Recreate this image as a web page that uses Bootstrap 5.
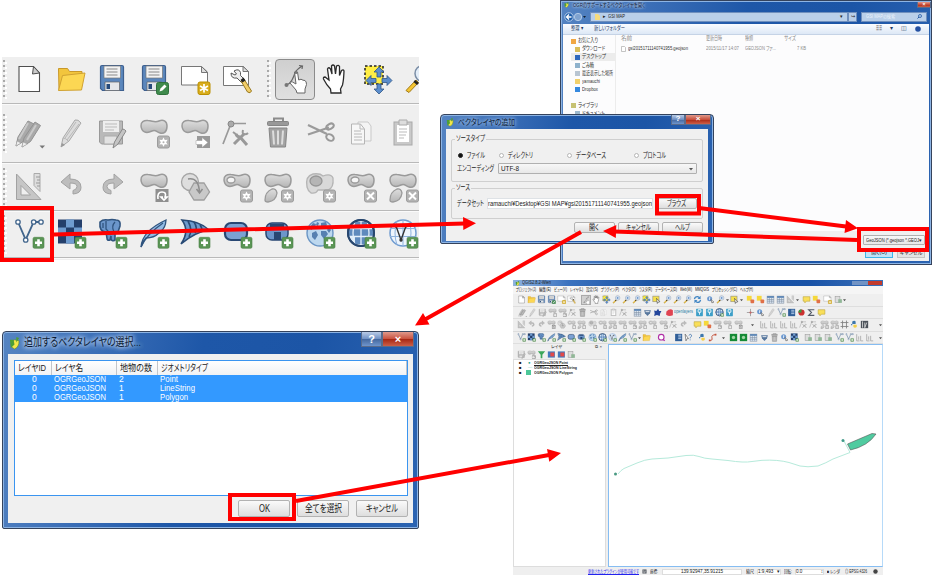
<!DOCTYPE html>
<html lang="ja">
<head>
<meta charset="utf-8">
<title>QGIS ベクタレイヤの追加</title>
<link rel="stylesheet" href="https://cdn.jsdelivr.net/npm/bootstrap@5.3.0/dist/css/bootstrap.min.css">
<style>
body{width:932px;height:575px;overflow:hidden;background:#fff;font-family:"Liberation Sans","Noto Sans CJK JP",sans-serif;font-feature-settings:"palt";color:#222;line-height:1}
.stage{width:932px;height:575px;overflow:hidden}
.win,.overlay{position:absolute}
.fit{display:inline-block;white-space:nowrap;flex:none;transform-origin:0 50%}
svg{display:block;flex:none}
/* large toolbars */
.tools{left:2px;top:57px;width:417px;height:203px;background:#efefef;overflow:hidden}
.trow{border-bottom:1px solid #b9b9b9;box-shadow:0 1px #fafafa;flex:none}
.trow.r1{height:47px;padding-bottom:2px}.trow.r2{height:59px}.trow.r3{height:48px}.trow.r4{height:47px}
.grip{width:6.3px;height:40px;flex:none;background:radial-gradient(circle at 2px 2px,#a9a9a9 .9px,transparent 1.2px) 0 0/5px 5px,radial-gradient(circle at 2px 2px,#fff 1px,transparent 1.3px) 2px 2px/5px 5px}
.grip.mid{margin-left:8px;margin-right:2px}
.cell{width:41.55px;flex:none}
.cell svg{width:32px;height:32px}
.pressed{width:40px;height:41px;border:1px solid #8b8b8b;border-radius:4px;background:linear-gradient(#cfcfcf,#e0e0e0)}
/* window frames */
.aero{background:linear-gradient(100deg,#5584c2 0,#3d70b8 20%,#1e57a8 45%,#1c55a6 70%,#2c64b2 100%);border:1px solid #35435c;border-radius:4px 4px 2px 2px;box-shadow:inset 0 0 0 1px #8db4e4}
.body-area{background:#f0f0f0}
.capbtn{color:#fff;border:1px solid #5a6c8c;border-top:0;background:linear-gradient(#b9cbe6,#6d8fc4 50%,#44689f 52%,#6f95cc);font-weight:700}
.capbtn.red{background:linear-gradient(#e09a8c,#c9503d 50%,#a82814 52%,#cd5f48)}
.wbtn{border:1px solid #b2b2b2;border-radius:2px;background:linear-gradient(#fafafa,#ececec 50%,#dedede);flex:none}
.cmb{border:1px solid #b0b0b0;background:linear-gradient(#f7f7f7,#e8e8e8);border-radius:1px}
/* layer selection dialog */
.sel{left:2px;top:331px;width:417px;height:198px}
.sel .ttl{height:22px;padding-left:6px}
.sel .ttl .fit{font-size:11.5px;color:#0a1a33;text-shadow:0 0 6px #cfe0f7,0 0 5px #cfe0f7,0 0 8px #a9c7ef}
.sel .body-area{margin:0 5px 5px;height:169px;padding:6px 5px 0 6px}
.grid-box{height:136px;border:1px solid #3b95f0;background:#fff}
.hd{height:14px;background:linear-gradient(#fff,#f1f2f4);font-size:9.5px}
.hd>div{border-right:1px solid #c2c5ca;padding-left:3px}
.c1{width:37px}.c2{width:65px}.c3{width:41px}.c4{flex:1}
.pick{background:#3399ff;color:#fff;font-size:8.5px;height:27px}
.pick .d-flex{height:8.9px}
.pick .c1{padding-left:17px}.pick .c2,.pick .c3,.pick .c4{padding-left:2px}
.sel .wbtn{width:52px;height:17px;font-size:10px}
/* explorer */
.exp{left:560px;top:0;width:372px;height:265px;border-radius:0}
.exp .ttl{height:8px;padding-left:3px;font-size:6px}
.exp .ttl .fit{color:#0d2040;text-shadow:0 0 3px #cfe0f7,0 0 3px #cfe0f7}
.exp .nav-line{height:15px;padding:0 4px 0 3px;font-size:5px}
.addr{background:#b9cfe9;border:1px solid #6f8fbd;height:10px}
.cmdbar{height:11px;background:linear-gradient(#fafcff,#dde8f6);margin:0 2px;font-size:5.5px;color:#1e3a63;border-bottom:1px solid #c5d3e6}
.pane{margin:0 2px;height:196px;background:#fcfcfd;font-size:5.6px;color:#333}
.side{width:53px;border-right:1px solid #ececec;padding:2px 0 0 8px}
.side .it{height:8.15px;padding-left:4px}
.side .it i,.side .tp i{width:5px;height:5px;margin-right:2px;flex:none}
.foot{margin:0 2px;height:30px;background:#f0f0f0;font-size:5px}
.foot .cmb{width:62px;height:10px}
.fbtn{width:28px;height:9px;border:1px solid #c4c4c4;background:#e3e3e3;overflow:hidden;white-space:nowrap}
.fbtn.hot{border-color:#3fb4e8;background:#bfe3f7}
.gray{color:#8b8b8b}
/* add vector layer dialog */
.add{left:440px;top:114px;width:274px;height:130px}
.add .ttl{height:14px;padding-left:4px}
.add .ttl .fit{font-size:8.5px;color:#0a1a33;text-shadow:0 0 4px #b8d2f4,0 0 5px #b8d2f4}
.add .body-area{margin:0 5px;height:112px;padding:6px 5px 0;font-size:7.5px}
.grp{border:1px solid #cfcfcf;border-radius:2px;position:relative;padding:11px 5px 0 5px}
.grp .cap{position:absolute;left:3px;top:-5px;background:#f0f0f0;padding:0 1px}
.dot{width:5px;height:5px;border:1px solid #b5b5b5;border-radius:50%;background:#fff;flex:none;margin-right:4px}
.dot.on{background:#111;border-color:#222}
.add .wbtn{width:41.5px;height:11px;margin-left:2.5px}
/* main QGIS window */
.qgis{left:513px;top:280px;width:370px;height:295px;background:#efefef}
.qgis .ttl{height:6px;background:linear-gradient(90deg,#8fb3de,#3b72bf 15%,#17509f 40%,#1a53a7 80%,#3a70b8);font-size:4.5px;padding-left:2px}
.menu{height:8px;background:#f5f5f5;font-size:4.6px;padding-left:3px;gap:3px}
.mini{height:12.6px;padding-left:3px;border-bottom:1px solid #dedede}
.mini .m{width:10.15px;height:10px;flex:none}
.mini .m svg{width:9px;height:9px;margin:auto}
.mini .dd{width:4px;flex:none}
.mini .dd svg{width:3px;height:4px}
.mini .on{background:#d0d0d0;border:1px solid #aaa}
.work{height:223px}
.dock{width:93px;font-size:4.2px}
.tree{background:#fff;flex:1;border:1px solid #ddd;font-weight:700}
.tree>div{height:4.9px;padding-left:5px}
.canvas{flex:1;margin-left:2px;border:1px solid #86bdf2;border-right-color:#b6daf9;background:#fff}
.status{height:9px;font-size:4.6px}
.fld{background:#fff;border:1px solid #ddd;height:6px;line-height:4.5px}
</style>
</head>
<body>
<svg width="0" height="0" style="position:absolute">
<defs>
<linearGradient id="gg" x1="0" y1="0" x2="0" y2="1"><stop offset="0" stop-color="#dedede"/><stop offset="1" stop-color="#b5b5b5"/></linearGradient>
<g id="bplus"><rect x="20" y="19.3" width="11" height="11" rx="1.5" fill="#5a9555" stroke="#4b8247" stroke-width=".6"/><path d="M25.5 21.3v7M22 24.8h7" stroke="#fff" stroke-width="2.6"/></g>
<g id="bstar"><rect x="19.5" y="19" width="12" height="12" rx="2" fill="#b3b3b3" stroke="#9c9c9c"/><path d="M25.5 20.6l1.3 2.5 2.9-.3-1.6 2.4 1.6 2.4-2.9-.3-1.3 2.5-1.3-2.5-2.9.3 1.6-2.4-1.6-2.4 2.9.3z" fill="#fff"/><circle cx="25.5" cy="25.2" r="1" fill="#b3b3b3"/></g>
<g id="bx"><rect x="19.5" y="19" width="12" height="12" rx="2" fill="#b3b3b3" stroke="#9c9c9c"/><path d="M22 21.5l7 7m0-7l-7 7" stroke="#fff" stroke-width="2"/></g>
<path id="blob" d="M3 9C2.500 5 6 3 10 3.500C15 4 17 6 21 4C25 2 29 4 29 9C29 15 26 17 22 16C18 15 18 12 14 14C8 17 3.500 15 3 9z"/>
<symbol id="doc" viewBox="0 0 32 32"><path d="M6 3.500h14.500l6 6.500v18.500H6z" fill="#fff" stroke="#4f4f4f" stroke-width="1.100"/><path d="M20.500 3.500l-1 7.500 7-1z" fill="#ccc" stroke="#4f4f4f"/></symbol>
<symbol id="folder" viewBox="0 0 32 32"><path d="M4 27.500l-.5-22h9l2 3h12.500v6" fill="#f2c53d" stroke="#c9982a"/><path d="M3.500 27.500l4-15 22.500-2.500-3.500 17z" fill="#fcd753" stroke="#d0a232"/></symbol>
<symbol id="save" viewBox="0 0 32 32"><path d="M4.500 4q0-1.500 1.500-1.500h20q1.500 0 1.500 1.500v23.500h-21l-2-2z" fill="#5b87bd" stroke="#3e608f" stroke-width="1.200"/><path d="M8 3h16.500v12H8z" fill="#f3f3f3" stroke="#777" stroke-width=".7"/><path d="M10.500 6h11M10.500 9h11M10.500 12h11" stroke="#888"/><path d="M9 19h14.500v8.500H9z" fill="#e4e7ea" stroke="#666" stroke-width=".7"/><path d="M10.500 21h3.500v5h-3.500z" fill="#274b7b"/></symbol>
<symbol id="saveedit" viewBox="0 0 32 32"><use href="#save"/><rect x="18.500" y="19.500" width="12" height="12" rx="2" fill="#3f8a4c" stroke="#2f713b"/><path d="M21.500 28.500l1-3 4-4 2 2-4 4z" fill="#fff"/></symbol>
<symbol id="layout" viewBox="0 0 32 32"><path d="M2.500 3.500h20l6 5.500v13h-26z" fill="#fff" stroke="#777"/><path d="M22.500 3.500v6h6z" fill="#ddd" stroke="#777"/><rect x="19" y="19" width="12" height="12.500" rx="2" fill="#d8ad1d" stroke="#bb9000"/><path d="M25 21v8.500M21 23l8 4.500M29 23l-8 4.500" stroke="#fff" stroke-width="1.700"/></symbol>
<symbol id="wrench" viewBox="0 0 32 32"><path d="M2.500 3.500h20l5 5v14h-25z" fill="#fff" stroke="#777"/><path d="M22 3.500v5h5.500z" fill="#ddd" stroke="#777"/><path d="M13 8q5-3 6.500 1.500 0 2 0 3l4 4-3 3-4.500-4.500q-6 1-6-5l4 2 1.500-1z" fill="#eee" stroke="#555"/><path d="M20 18l3-2 7.500 12q-1 3-4 1z" fill="#f2ce69" stroke="#98781f"/><path d="M19.500 17l3-2.500 2 3-3 2z" fill="#222"/></symbol>
<symbol id="touch" viewBox="0 0 32 32"><path d="M7 22q4-1 6-5t3-7 7-7M20 2.500l3.500.5-.5 3" fill="none" stroke="#666" stroke-width="1.200"/><path d="M15.500 9q1.500-2 3 0l1.200 8 2.300-.8 2 1 2 .3q1.500 1 1.500 4l-1.500 4.500v4h-8l-1-3-6-7q0-2 2.500-1l3.500 2z" fill="#fff" stroke="#666" stroke-width="1"/><circle cx="7.500" cy="22" r="2" fill="#777"/><circle cx="17" cy="9.500" r="1.500" fill="#777"/></symbol>
<symbol id="hand" viewBox="0 0 32 32"><path d="M11 30l-.5-4q-4-4-7-10-.5-2 1.500-2l4 3-1.500-11q1-2.500 3 0l1.500 5-.5-8q1.500-2 3 0l1 8 1-8q2-1.500 3 .5l0 9 2-5q2-1.500 2.500.5-.3 9-1.500 14l-2 4 .5 4z" fill="#fff" stroke="#2b2b2b" stroke-width="1.300"/></symbol>
<symbol id="pan" viewBox="0 0 32 32"><path d="M3 3h18v18H3z" fill="#ffee45" stroke="#222" stroke-width="1.500" stroke-dasharray="2.500 2"/><g fill="#5b8dcc" stroke="#315785" stroke-width=".8"><path d="M17 4l5 5h-3v5h-4V9h-3zM17 31l5-5h-3v-5h-4v5h-3zM4 17.500l5-5v3h5v4H9v3zM30 17.500l-5-5v3h-5v4h5v3z"/></g></symbol>
<symbol id="zoom" viewBox="0 0 32 32"><circle cx="20" cy="10.500" r="8" fill="#e3edf8" stroke="#7a8da5" stroke-width="1.500"/><path d="M16 10.500h8M20 6.500v8" stroke="#3d73b8" stroke-width="2"/><path d="M13 17l2.500 2.500-9.500 10-3-2z" fill="#f4c532" stroke="#a27b19"/><path d="M12 17l4 3-2 2-3.500-3z" fill="#222"/></symbol>
<symbol id="pencils" viewBox="0 0 32 32"><g fill="#a9a9a9" stroke="#929292"><path d="M3 29l2-9 10-16 6 3-10 17z"/><path d="M9 30l2-9 11-16 5.500 3.500-10 16z"/></g><path d="M6 22l9-16M14 23l9-15" stroke="#c9c9c9" stroke-width="2"/><path d="M3 29l1-5 4 2zM9 30l1-5 4.500 2z" fill="#eee" stroke="#999" stroke-width=".5"/><path d="M26.500 28.500h5.500l-2.700 3z" fill="#777"/></symbol>
<symbol id="pencil" viewBox="0 0 32 32"><path d="M6 30l2-9L20 3q3-1 6 3L14 24z" fill="#dcdcdc" stroke="#a8a8a8"/><path d="M10 21L21 5M12 23L24 7M8 21q3 0 5 3" stroke="#b8b8b8" fill="none"/><path d="M6 30l1-4 3 2z" fill="#999"/></symbol>
<symbol id="saveg" viewBox="0 0 32 32"><path d="M3.500 4h23v23h-21l-2-2z" fill="#b9b9b9" stroke="#999"/><path d="M7 4h16v11H7z" fill="#eee"/><path d="M9 7h12M9 10h12M9 13h9" stroke="#bbb"/><path d="M8 19h13v8H8z" fill="#e2e2e2" stroke="#aaa"/><path d="M17 31l1.500-6 8-13q2 0 3.500 2l-8 13z" fill="#c4c4c4" stroke="#888"/></symbol>
<symbol id="blobstar" viewBox="0 0 32 32"><use href="#blob" fill="url(#gg)" stroke="#9a9a9a" stroke-width="1.500"/><use href="#bstar"/></symbol>
<symbol id="blobarrow" viewBox="0 0 32 32"><use href="#blob" fill="url(#gg)" stroke="#9a9a9a" stroke-width="1.500"/><rect x="18" y="19" width="13" height="12" fill="#999"/><path d="M17 23.500h6v-3l6 5-6 5v-3h-6z" fill="#fff" stroke="#999" stroke-width=".5"/></symbol>
<symbol id="blobrot" viewBox="0 0 32 32"><use href="#blob" fill="url(#gg)" stroke="#9a9a9a" stroke-width="1.500"/><rect x="17.500" y="18" width="13" height="13" fill="#8f8f8f"/><path d="M20 28q-1-7 4-7 5 0 3 5l2 0-3 3-3-3h2" fill="none" stroke="#fff" stroke-width="1.600"/></symbol>
<symbol id="node" viewBox="0 0 32 32"><path d="M2 27L10 6.500h15" fill="none" stroke="#999" stroke-width="1.700"/><circle cx="10" cy="7" r="3" fill="#aaa" stroke="#888"/><path d="M13 27l10-10M15 17q1 3 4 3l7 8" stroke="#999" stroke-width="3" fill="none"/><path d="M22 13q-1 4 1 4 2 1 4-1M12 15l4 3" stroke="#999" stroke-width="2" fill="none"/></symbol>
<symbol id="trash" viewBox="0 0 32 32"><path d="M12 5V1.500h9V5" fill="none" stroke="#8c8c8c" stroke-width="2"/><rect x="5.500" y="4.500" width="21" height="4" rx="1" fill="#999" stroke="#858585"/><path d="M7 11h18l-1.500 19h-15z" fill="#a2a2a2" stroke="#868686"/><path d="M11 13.500l1 14M16 13.500v14M21 13.500l-1 14" stroke="#ddd" stroke-width="2"/></symbol>
<symbol id="cut" viewBox="0 0 32 32"><path d="M4 8l19 9M4 17.500l21-7" stroke="#9b9b9b" stroke-width="2.200"/><ellipse cx="26" cy="9.500" rx="4" ry="2.500" transform="rotate(-30 26 9.500)" fill="none" stroke="#999" stroke-width="2"/><ellipse cx="26" cy="20.500" rx="4" ry="3" transform="rotate(30 26 20.500)" fill="none" stroke="#999" stroke-width="2"/></symbol>
<symbol id="copy" viewBox="0 0 32 32"><path d="M13 5h10l3 4v15H13z" fill="#f4f4f4" stroke="#c9c9c9"/><path d="M6.500 7h9l4 5v15h-13z" fill="#f7f7f7" stroke="#b5b5b5"/><path d="M9 14h7M9 17h8M9 20h8M9 23h8M15 7v5h4" stroke="#b8b8b8" fill="none"/></symbol>
<symbol id="paste" viewBox="0 0 32 32"><rect x="7" y="5" width="18" height="23" fill="#c9c9c9" stroke="#a9a9a9"/><path d="M10 8h12v17H10z" fill="#fff"/><path d="M12 3h8v5h-8z" fill="#ddd" stroke="#aaa"/><path d="M12 12h8M12 15h8M12 18h7M12 21h5" stroke="#bbb"/></symbol>
<symbol id="ruler" viewBox="0 0 32 32"><path d="M3.500 3L28 28.500H3.500zM8 14.500V24h9.500z" fill="#c6c6c6" fill-rule="evenodd" stroke="#a2a2a2"/><path d="M21 2.500h6v18l-6-6z" fill="#ddd" stroke="#aaa"/><path d="M23 6h4M24 9h3M23 12h4M24 15h3" stroke="#999"/></symbol>
<symbol id="undo" viewBox="0 0 32 32"><path d="M6 11l9-8v5q11 0 11 8.500 0 6-8 6.500v-3.500q4-1 4-4 0-3.500-7-3.500v6z" fill="#bdbdbd" stroke="#a2a2a2"/></symbol>
<symbol id="redo" viewBox="0 0 32 32"><path d="M27 11l-9-8v5q-11 0-11 8.500 0 6 8 6.500v-3.500q-4-1-4-4 0-3.500 7-3.500v6z" fill="#bdbdbd" stroke="#a2a2a2"/></symbol>
<symbol id="hexa" viewBox="0 0 32 32"><circle cx="11" cy="11" r="8.500" fill="#dedede" stroke="#a5a5a5" stroke-width="1.300"/><path d="M15 12h10l5.500 9-5.500 8H15l-5-8z" fill="#c9c9c9" stroke="#9f9f9f" stroke-width="1.300"/><path d="M9 8q11-2 11.500 14m-3-4l3 4 3-4" fill="none" stroke="#8d8d8d" stroke-width="1.500"/></symbol>
<symbol id="ring" viewBox="0 0 32 32"><use href="#blob" fill="url(#gg)" stroke="#9a9a9a" stroke-width="1.500"/><ellipse cx="10" cy="9" rx="4" ry="3" fill="#f5f5f5" stroke="#9a9a9a" stroke-width="1.300"/></symbol>
<symbol id="ringstar" viewBox="0 0 32 32"><use href="#ring"/><use href="#bstar"/></symbol>
<symbol id="ringx" viewBox="0 0 32 32"><use href="#ring"/><use href="#bx"/></symbol>
<symbol id="two" viewBox="0 0 32 32"><use href="#blob" fill="url(#gg)" stroke="#9a9a9a" stroke-width="1.500"/><path d="M3 29q0-8 7-11 4-1 5 4-1 8-9 9-3 0-3-2z" fill="url(#gg)" stroke="#9a9a9a" stroke-width="1.300"/></symbol>
<symbol id="twostar" viewBox="0 0 32 32"><use href="#two"/><use href="#bstar"/></symbol>
<symbol id="twox" viewBox="0 0 32 32"><use href="#two"/><use href="#bx"/></symbol>
<symbol id="fillstar" viewBox="0 0 32 32"><path d="M3 16Q1 5 9 3q7-1 10 2 8-3 10 2 1 10-5 12l-10 0q-2 4-7 3-3-2-4-6z" fill="#d9d9d9" stroke="#b5b5b5" stroke-width="1.300"/><ellipse cx="12" cy="10" rx="6" ry="5" fill="#b5b5b5" stroke="#969696" stroke-width="1.300"/><use href="#bstar"/></symbol>
<symbol id="vec" viewBox="0 0 32 32"><path d="M5 4l7.700 17.700L20.700 4H28" fill="none" stroke="#41658c" stroke-width="1.800"/><g fill="#fff" stroke="#41658c" stroke-width="1.300"><circle cx="5" cy="4" r="2.200"/><circle cx="12.700" cy="22" r="2.200"/><circle cx="20.700" cy="4" r="2.200"/><circle cx="28" cy="4" r="2.200"/></g><use href="#bplus"/></symbol>
<symbol id="raster" viewBox="0 0 32 32"><path d="M3 1.500h24v24H3z" fill="#243f6b"/><path d="M11 1.500h8v8h-8zM3 9.500h8v8H3zM19 9.500h8v8h-8zM11 17.500h8v8h-8z" fill="#6f9cd0"/><use href="#bplus"/></symbol>
<symbol id="eleph" viewBox="0 0 32 32"><path d="M4 4q3-3 8-2 4-1 8 0 5 0 4 6l-2 6-3 0v8q-3 2-4-1v-3l-1 4q-3 1-3-2l-1-6Q3 14 4 4z" fill="#6b96cb" stroke="#30547f" stroke-width="1.600"/><path d="M10 3v8q4 4 5 6M19 4q-4 4-1 10M7 5v5" fill="none" stroke="#30547f" stroke-width="1.300"/><use href="#bplus"/></symbol>
<symbol id="feather" viewBox="0 0 32 32"><path d="M3 29Q4 13 28 2q-.5 8-5 11l-4 1 2 1q-5 5-13 5-3 3-5 9z" fill="#92bbe4" stroke="#30547f" stroke-width="1.300"/><path d="M3 29Q9 16 25 5" stroke="#30547f" fill="none" stroke-width="1.300"/><use href="#bplus"/></symbol>
<symbol id="sail" viewBox="0 0 32 32"><path d="M3 2q18 1 27 10-14 2-28 14Q11 13 3 2z" fill="#6e9bcc" stroke="#284a75" stroke-width="1.600"/><path d="M9 3q5 9 1 16M15 4q4 6 1 11M21 7q3 4 1 7" fill="none" stroke="#284a75" stroke-width="1.600"/><use href="#bplus"/></symbol>
<symbol id="oval" viewBox="0 0 32 32"><rect x="4" y="5" width="22" height="17" rx="6" fill="#7ba1d2" stroke="#284773" stroke-width="2.200"/><use href="#bplus"/></symbol>
<symbol id="ovalsq" viewBox="0 0 32 32"><rect x="4" y="5" width="22" height="17" rx="6" fill="#6c96cb" stroke="#284773" stroke-width="1.500"/><path d="M8 6h14v4H8zM12 14h7v8h-7z" fill="#284773"/><use href="#bplus"/></symbol>
<symbol id="globew" viewBox="0 0 32 32"><circle cx="16" cy="15" r="13" fill="#bdd8ef" stroke="#6a95c5" stroke-width="1.400"/><path d="M6 9l3-4 3 1-1 3-4 3zM17 5l5-1 1 3-3 3-3-2zM8 15l4-2 2 4-3 5-3-3zM17 13l5 0 2 3-4 5-3-4zM13 4l2 1-1 3-2-1zM25 9l2 3-2 3-2-3z" fill="#5680b1"/><use href="#bplus"/></symbol>
<symbol id="globeg" viewBox="0 0 32 32"><circle cx="16" cy="15" r="13" fill="#dceaf7" stroke="#28476f" stroke-width="2"/><path d="M10 4h12v6H10zM4 11h6v7H4zM22 11h6v7h-6zM10 19h12v7H10zM10 11h12v7H10z" fill="#5f8abd"/><path d="M3 10.500h26M3 18.500h26M16 2v26M10 3q-4 12 0 24M22 3q4 12 0 24" stroke="#e3effb" stroke-width="1.300" fill="none"/><circle cx="16" cy="15" r="13" fill="none" stroke="#28476f" stroke-width="2"/><use href="#bplus"/></symbol>
<symbol id="globev" viewBox="0 0 32 32"><circle cx="16" cy="15" r="13" fill="#eef5fd" stroke="#6f9bd0" stroke-width="1.500"/><path d="M3 10.500h26M3 18.500h26M16 2v26M10 3q-4 12 0 24M22 3q4 12 0 24" stroke="#8fb3dd" fill="none"/><path d="M9 8l5 14 5-14h5" fill="none" stroke="#333" stroke-width="1.400"/><g fill="#333"><circle cx="9" cy="8" r="1.500"/><circle cx="14" cy="22" r="1.700"/><circle cx="19" cy="8" r="1.500"/></g><use href="#bplus"/></symbol>
<symbol id="dd" viewBox="0 0 8 8"><path d="M0 2h8L4 7z" fill="#555"/></symbol>
<symbol id="q" viewBox="0 0 32 32"><path d="M20 20l7 8" stroke="#b02fa6" stroke-width="5"/><circle cx="15" cy="15" r="10" fill="#fff" stroke="#b02fa6" stroke-width="4"/></symbol>
<symbol id="ysel" viewBox="0 0 32 32"><rect x="3" y="4" width="22" height="20" fill="#f6e04c" stroke="#888" stroke-width="2"/><path d="M16 12l12 12-6 1-3 5z" fill="#fff" stroke="#333" stroke-width="2"/></symbol>
<symbol id="yred" viewBox="0 0 32 32"><rect x="3" y="3" width="17" height="17" fill="#f5d83a"/><rect x="16" y="16" width="13" height="13" rx="3" fill="#e07048"/></symbol>
<symbol id="blues" viewBox="0 0 32 32"><rect x="4" y="3" width="24" height="26" rx="2" fill="#3d9fc8"/><path d="M11 6h10v9H11zM16 15v9" stroke="#fff" stroke-width="3" fill="none"/></symbol>
<symbol id="navy" viewBox="0 0 32 32"><path d="M4 9l8 2 6-8 4 8 8 0-5 9-1 8-10-3-10 3 2-9z" fill="#24469c"/></symbol>
<symbol id="red" viewBox="0 0 32 32"><path d="M5 12Q18 0 28 8v18q-14 6-24-2z" fill="#e04452"/></symbol>
<symbol id="reddot" viewBox="0 0 32 32"><circle cx="16" cy="16" r="11" fill="#cc3030"/><path d="M16 16V4A12 12 0 0 0 5 17z" fill="#3a9642"/></symbol>
<symbol id="green" viewBox="0 0 32 32"><rect x="3" y="3" width="26" height="26" fill="#158a35"/><circle cx="16" cy="16" r="6" fill="#a0d6a5"/></symbol>
<symbol id="table" viewBox="0 0 32 32"><rect x="4" y="4" width="24" height="25" fill="#dfe9f4" stroke="#7d8da0" stroke-width="2"/><path d="M4 7h24" stroke="#5580b3" stroke-width="6"/><path d="M4 16h24M4 22h24M12 10v18M20 10v18" stroke="#7d8da0" stroke-width="2"/></symbol>
<symbol id="dark" viewBox="0 0 32 32"><rect x="3" y="3" width="26" height="26" fill="#4b5159"/><path d="M9 5v22M17 9v18l7-18" stroke="#ddd" stroke-width="3" fill="none"/></symbol>
<symbol id="bbook" viewBox="0 0 32 32"><rect x="4" y="3" width="25" height="26" fill="#315f98"/><path d="M15 8h11M15 14h11M15 20h11" stroke="#c2d9f2" stroke-width="3"/></symbol>
<symbol id="help" viewBox="0 0 32 32"><path d="M4 4l12 16-5 0-4 8z" fill="#fff" stroke="#444" stroke-width="2"/><path d="M18 9q1-5 6-4 5 2 2 7-4 3-4 7m0 4v3" fill="none" stroke="#5b87b8" stroke-width="3.500"/></symbol>
<symbol id="py" viewBox="0 0 32 32"><path d="M8 14V5q8-4 12 0v9H8v5H4v-5z" fill="#3d77ad"/><path d="M24 15v10q-7 5-12 0v-8h12z" fill="#f3cf4b"/></symbol>
<symbol id="curve" viewBox="0 0 32 32"><path d="M5 27q12 1 9-10T28 6" fill="none" stroke="#c4543e" stroke-width="3.500"/><path d="M3 23h6v6H3zM24 3h6v6h-6z" fill="#c4543e"/></symbol>
<symbol id="heart" viewBox="0 0 32 32"><path d="M4 8l24 0-3 11-9 9-9-9z" fill="#58779d"/><path d="M9 13h14" stroke="#fff" stroke-width="3"/></symbol>
<symbol id="grid" viewBox="0 0 32 32"><path d="M9 2v28M23 2v28M2 9h28M2 23h28" stroke="#7f7f7f" stroke-width="3"/></symbol>
<symbol id="bars" viewBox="0 0 32 32"><path d="M6 4v24h10M13 12v12M20 10v18h9" fill="none" stroke="#aaa" stroke-width="3"/></symbol>
<symbol id="gbox" viewBox="0 0 32 32"><rect x="4" y="5" width="17" height="22" fill="#ddd" stroke="#9c9c9c" stroke-width="2"/><path d="M15 15h13v13H15z" fill="#91b797"/></symbol>
<symbol id="note" viewBox="0 0 32 32"><path d="M4 6h24v16H16l-6 6v-6H4z" fill="#f9df5a" stroke="#baa23b" stroke-width="2"/></symbol>
<symbol id="sigma" viewBox="0 0 32 32"><path d="M26 6H6l10 10L6 26h20" fill="none" stroke="#545b68" stroke-width="4"/></symbol>
<symbol id="refresh" viewBox="0 0 32 32"><path d="M5 15q2-10 12-9l7 4M27 17q-2 10-12 9l-7-4" fill="none" stroke="#4387c5" stroke-width="4.500"/><path d="M27 3v11H16zM5 29V18h11z" fill="#4387c5"/></symbol>
<symbol id="cross" viewBox="0 0 32 32"><path d="M16 3v26M3 16h26" stroke="#999" stroke-width="3"/><circle cx="16" cy="16" r="4" fill="#c76565"/></symbol>
<symbol id="info" viewBox="0 0 32 32"><circle cx="13" cy="13" r="9" fill="#6c99d0"/><path d="M13 8v10" stroke="#fff" stroke-width="3"/><path d="M17 16l11 9-7 3z" fill="#fff" stroke="#444" stroke-width="2"/></symbol>
<symbol id="filter" viewBox="0 0 32 32"><path d="M3 4h26L19 17v12h-6V17z" fill="#3ba65a"/></symbol>
<symbol id="rb" viewBox="0 0 32 32"><rect x="3" y="5" width="25" height="22" fill="#4379bd"/><rect x="12" y="9" width="14" height="14" fill="#e34848"/></symbol>
<symbol id="qlogo" viewBox="0 0 12 14"><path d="M6 3q-5 2-3 8l3 2q5-2 5-9z" fill="#f3e64a" stroke="#638d28" stroke-width=".7"/><path d="M1 3l4 0 1 5-4 4zM8 0l3 1-3 5z" fill="#4d9f36"/></symbol>
</defs></svg>

<main class="stage position-relative">

<!-- large toolbar excerpt -->
<section class="win tools d-flex flex-column">
 <div class="trow r1 d-flex align-items-center" data-big="doc folder save saveedit layout wrench | touch* hand pan zoom"></div>
 <div class="trow r2 d-flex align-items-center" data-big="pencils pencil saveg blobstar blobarrow node trash cut copy paste"></div>
 <div class="trow r3 d-flex align-items-center" data-big="ruler undo redo blobrot hexa ringstar twostar fillstar ringx twox"></div>
 <div class="trow r4 d-flex align-items-center" data-big="vec raster eleph feather sail oval ovalsq globew globeg globev"></div>
</section>

<!-- file chooser -->
<section class="win exp aero">
 <div class="ttl d-flex align-items-center"><svg width="5" height="6" class="me-1"><use href="#qlogo"/></svg><span class="fit" data-w="72">OGRのサポートするベクタレイヤを開く</span><span class="capbtn red ms-auto text-center" style="width:14px;height:6px;font-size:5px">×</span></div>
 <div class="nav-line d-flex align-items-center">
  <svg width="22" height="10" viewBox="0 0 22 10"><circle cx="5" cy="5" r="4.200" fill="#1c5ca8" stroke="#cfe1f5" stroke-width=".8"/><path d="M2.500 5h5M5 2.500L2.500 5 5 7.500" stroke="#fff" fill="none" stroke-width="1.300"/><circle cx="14" cy="5" r="3.700" fill="#7fa3d0" stroke="#c2d5ec" stroke-width=".8"/><path d="M19 4h3l-1.500 2z" fill="#123"/></svg>
  <div class="addr d-flex align-items-center flex-grow-1 ms-1 ps-1"><svg width="5" height="6" viewBox="0 0 5 6"><path d="M0 0h3l2 2v4H0z" fill="#f5db7d"/></svg><span style="margin:0 2px 0 3px">▸</span><span class="fit" data-w="17">GSI MAP</span><span class="ms-auto me-1">▾</span></div>
  <div class="addr d-flex align-items-center justify-content-center" style="width:9px">↪</div>
  <div class="addr d-flex align-items-center ms-1 px-1" style="width:66px;color:#eaf2fb"><span class="fit" data-w="29">GSI MAPの検索</span><svg class="ms-auto" width="5" height="5" viewBox="0 0 5 5"><circle cx="3" cy="2" r="1.500" fill="none" stroke="#245aa5" stroke-width=".8"/><path d="M2 3L.5 4.500" stroke="#245aa5"/></svg></div>
 </div>
 <div class="cmdbar d-flex align-items-center px-2"><span class="fit" data-w="12">整理 ▾</span><span class="fit" data-w="31" style="margin-left:11px">新しいフォルダー</span><span class="ms-auto gray">☷</span><span class="mx-2">▾</span><span class="me-2">◫</span><svg width="6" height="6" viewBox="0 0 6 6"><circle cx="3" cy="3" r="2.800" fill="#2450a2"/></svg></div>
 <div class="pane d-flex">
  <div class="side overflow-hidden">
   <div class="tp d-flex align-items-center mb-0" style="height:8px"><i style="background:#f0a643"></i><span class="fit" data-w="20">お気に入り</span></div>
   <div class="it d-flex align-items-center"><i style="background:#d9bd58"></i><span class="fit" data-w="23">ダウンロード</span></div>
   <div class="it d-flex align-items-center" style="background:#ececec"><i style="background:#2e68bd"></i><span class="fit" data-w="24">デスクトップ</span></div>
   <div class="it d-flex align-items-center"><i style="background:#8fb2cc"></i><span class="fit" data-w="12">ごみ箱</span></div>
   <div class="it d-flex align-items-center"><i style="background:#b8c5d2"></i><span class="fit" data-w="31">最近表示した場所</span></div>
   <div class="it d-flex align-items-center"><i style="background:#f2d16c"></i><span class="fit" data-w="18">yamauchi</span></div>
   <div class="it d-flex align-items-center"><i style="background:#3589df"></i><span class="fit" data-w="16">Dropbox</span></div>
   <div class="tp d-flex align-items-center mt-2" style="height:8px"><i style="background:#c7c273"></i><span class="fit" data-w="20">ライブラリ</span></div>
   <div class="it d-flex align-items-center"><i style="background:#9db9ce"></i><span class="fit" data-w="23">ドキュメント</span></div>
  </div>
  <div class="flex-grow-1 gray">
   <div class="d-flex align-items-center" style="height:7px;padding-left:5px"><span style="width:85px">名前</span><span style="width:39px"><span class="fit" data-w="16">更新日時</span></span><span style="width:39px"><span class="fit" data-w="8">種類</span></span><span class="fit" data-w="12">サイズ</span></div>
   <div class="d-flex align-items-center" style="height:13px;padding-left:5px"><svg width="5" height="6" viewBox="0 0 5 6"><path d="M.5.5h3l1 1v4h-4z" fill="#fff" stroke="#aaa" stroke-width=".7"/></svg><span style="width:80px;padding-left:2px;color:#333"><span class="fit" data-w="60">gsi20151711140741955.geojson</span></span><span style="width:39px"><span class="fit" data-w="33">2015/11/17 14:07</span></span><span style="width:52px"><span class="fit" data-w="31">GEOJSON ファ...</span></span><span class="fit" data-w="9">7 KB</span></div>
  </div>
 </div>
 <div class="foot pe-1"><div class="d-flex justify-content-end pt-1"><div class="cmb d-flex align-items-center" style="padding:0 2px"><span class="fit" data-w="53">GeoJSON (*.geojson *.GEOJ</span><span class="ms-auto">▾</span></div></div>
 <div class="d-flex justify-content-end gap-1 pt-1"><div class="fbtn hot text-center">開く(O)</div><div class="fbtn text-center">キャンセル</div></div></div>
</section>

<!-- add vector layer -->
<section class="win add aero">
 <div class="ttl d-flex align-items-center"><svg width="8" height="9" class="me-1" style="margin-left:1px"><use href="#qlogo"/></svg><span class="fit" data-w="57">ベクタレイヤの追加</span>
  <div class="ms-auto d-flex align-self-start text-center" style="font-size:8px;margin-right:2px"><span class="capbtn" style="width:14px;height:10px">?</span><span class="capbtn red" style="width:26px;height:10px">×</span></div></div>
 <div class="body-area">
  <div style="height:4px"></div>
  <div class="grp" style="height:43px"><span class="cap"><span class="fit" data-w="29">ソースタイプ</span></span>
   <div class="d-flex align-items-center" style="height:9px;padding-left:1px"><span class="d-flex align-items-center" style="width:41px"><i class="dot on"></i><span class="fit" data-w="18">ファイル</span></span><span class="d-flex align-items-center" style="width:68px"><i class="dot"></i><span class="fit" data-w="25">ディレクトリ</span></span><span class="d-flex align-items-center" style="width:67px"><i class="dot"></i><span class="fit" data-w="30">データベース</span></span><span class="d-flex align-items-center"><i class="dot"></i><span class="fit" data-w="23">プロトコル</span></span></div>
   <div class="d-flex align-items-center" style="margin-top:3px"><span class="fit" data-w="37">エンコーディング</span><div class="cmb d-flex align-items-center flex-grow-1" style="height:11px;margin-left:4px;padding:0 3px 0 2px"><span class="fit" data-w="18">UTF-8</span><svg width="4" height="4" class="ms-auto"><use href="#dd"/></svg></div></div>
  </div>
  <div class="grp" style="height:31px;margin-top:6px;padding-top:9px"><span class="cap"><span class="fit" data-w="14">ソース</span></span>
   <div class="d-flex align-items-center"><span class="fit" data-w="27">データセット</span><div class="bg-white border overflow-hidden d-flex align-items-center" style="width:167px;height:11px;margin-left:3px"><span class="fit" data-w="164">ramauchi¥Desktop¥GSI MAP¥gsi20151711140741955.geojson</span></div><div class="wbtn d-flex align-items-center justify-content-center"><span class="fit" data-w="19">ブラウズ</span></div></div>
  </div>
  <div class="d-flex justify-content-end" style="margin-top:3px"><div class="wbtn d-flex align-items-center justify-content-center"><span class="fit" data-w="10">開く</span></div><div class="wbtn d-flex align-items-center justify-content-center"><span class="fit" data-w="25">キャンセル</span></div><div class="wbtn d-flex align-items-center justify-content-center"><span class="fit" data-w="15">ヘルプ</span></div></div>
 </div>
</section>

<!-- layer selection -->
<section class="win sel aero">
 <div class="ttl d-flex align-items-center"><svg width="11" height="13" class="me-1"><use href="#qlogo"/></svg><span class="fit" data-w="117">追加するベクタレイヤの選択...</span>
  <div class="ms-auto d-flex align-self-start text-center" style="font-size:11px;margin-right:4px"><span class="capbtn" style="width:21px;height:15px;line-height:14px">?</span><span class="capbtn red" style="width:32px;height:15px;line-height:14px">×</span></div></div>
 <div class="body-area">
  <div class="grid-box">
   <div class="hd d-flex"><div class="c1 d-flex align-items-center"><span class="fit" data-w="28">レイヤID</span></div><div class="c2 d-flex align-items-center"><span class="fit" data-w="28">レイヤ名</span></div><div class="c3 d-flex align-items-center"><span class="fit" data-w="32">地物の数</span></div><div class="c4 d-flex align-items-center"><span class="fit" data-w="47">ジオメトリタイプ</span></div></div>
   <div class="pick">
    <div class="d-flex align-items-center"><div class="c1">0</div><div class="c2"><span class="fit" data-w="52">OGRGeoJSON</span></div><div class="c3">2</div><div class="c4"><span class="fit" data-w="18">Point</span></div></div>
    <div class="d-flex align-items-center"><div class="c1">0</div><div class="c2"><span class="fit" data-w="52">OGRGeoJSON</span></div><div class="c3">1</div><div class="c4"><span class="fit" data-w="35">LineString</span></div></div>
    <div class="d-flex align-items-center"><div class="c1">0</div><div class="c2"><span class="fit" data-w="52">OGRGeoJSON</span></div><div class="c3">1</div><div class="c4"><span class="fit" data-w="28">Polygon</span></div></div>
   </div>
  </div>
  <div class="d-flex justify-content-end" style="gap:7px;margin-top:4px"><div class="wbtn d-flex align-items-center justify-content-center"><span class="fit" data-w="11">OK</span></div><div class="wbtn d-flex align-items-center justify-content-center"><span class="fit" data-w="37">全てを選択</span></div><div class="wbtn d-flex align-items-center justify-content-center"><span class="fit" data-w="32">キャンセル</span></div></div>
 </div>
</section>

<!-- QGIS main window -->
<section class="win qgis">
 <div class="ttl d-flex align-items-center"><svg width="5" height="5" style="margin-right:2px"><use href="#qlogo"/></svg><span class="fit" data-w="29">QGIS2.8.2-Wien</span><span class="ms-auto" style="width:16px;height:4px;background:#7193c4"></span><span style="width:14px;height:4px;background:#c23a2c;margin-right:1px"></span></div>
 <div class="menu d-flex align-items-center"><span class="fit" data-w="20">プロジェクト(J)</span><span class="fit" data-w="12">編集(E)</span><span class="fit" data-w="13">ビュー(V)</span><span class="fit" data-w="13">レイヤ(L)</span><span class="fit" data-w="12">設定(S)</span><span class="fit" data-w="18">プラグイン(P)</span><span class="fit" data-w="14">ベクタ(O)</span><span class="fit" data-w="13">ラスタ(R)</span><span class="fit" data-w="22">データベース(D)</span><span class="fit" data-w="12">Web(W)</span><span class="fit" data-w="14">MMQGIS</span><span class="fit" data-w="25">プロセッシング(C)</span><span class="fit" data-w="13">ヘルプ(H)</span></div>
 <div class="mini d-flex align-items-center" data-mini="doc folder save saveedit layout wrench _4 touch* hand pan zoom zoom zoom pan ysel zoom zoom zoom refresh _3 info zoom dd ysel dd _1 yred yred table table ruler dd _2 note yred layout _1 gbox dd"></div>
 <div class="mini d-flex align-items-center" data-mini="_1 pencils pencil saveg blobstar blobarrow node trash cut copy paste node _4 table heart navy _1 red =openlayers _1 blues blues globeg blues _11 cross info pencil vec bbook reddot sigma note"></div>
 <div class="mini d-flex align-items-center" data-mini="ruler undo redo blobrot hexa ringstar twostar fillstar ringx twox blobstar blobarrow twostar ringstar blobarrow node redo _4 note yred blobarrow blobstar blobrot _8 dd _3 bars bars bars bars node node twox twox grid py dark _9 dd"></div>
 <div class="mini d-flex align-items-center" data-mini="vec raster eleph feather sail oval ovalsq globew globeg globev feather vec dd folder _5 q _6 bbook help _4 py curve _4 dd _3 green green table heart trash info raster _4 gbox gbox gbox vec vec bars bars _4 dd"></div>
 <div class="work d-flex">
  <div class="dock d-flex flex-column">
   <div class="d-flex align-items-center" style="height:6px;padding-left:38px"><span>レイヤ</span><span class="ms-auto me-1">⧉ ×</span></div>
   <div class="d-flex align-items-center mini border-0" style="height:9px" data-mini="saveg blobarrow filter rb rb gbox"></div>
   <div class="tree pt-0"><div class="d-flex align-items-center"><span style="width:9px">■</span><span style="width:6px;color:#31a88e">●</span><span class="fit text-decoration-underline" data-w="34">OGRGeoJSON Point</span></div><div class="d-flex align-items-center"><span style="width:9px">■</span><span style="width:6px;color:#9de0c8">—</span><span class="fit" data-w="43">OGRGeoJSON LineString</span></div><div class="d-flex align-items-center"><span style="width:7px">■</span><span style="width:5px;height:5px;background:#4cc799;margin-right:3px"></span><span class="fit" data-w="39">OGRGeoJSON Polygon</span></div></div>
  </div>
  <div class="canvas"><svg width="272" height="220" viewBox="609 345 272 220">
   <path d="M618 474Q621 470 624 468.500L637 463Q645 459.500 652 459L668 458 686 455.500Q694 454.500 699 456.500T712 459L728 460.500Q744 463 752 461.500L762 460.300Q778 459.500 789 462.500L800 466Q807 467.500 818 466Q826 463 833 459L850 452.500 844 441" fill="none" stroke="#b6eadb" stroke-width="1"/>
   <circle cx="615.500" cy="474" r="1.500" fill="#4a9a82"/><circle cx="843" cy="440.500" r="1.500" fill="#3f9a88"/>
   <path d="M847.500 444l24.500-10.500 4 .5q-8 12-25.500 16z" fill="#50cba0" stroke="#555" stroke-width=".6"/></svg></div>
 </div>
 <div class="status d-flex align-items-center"><span class="fit text-decoration-underline ms-auto" style="color:#22e" data-w="51">更新されたプラグインが使用可能です</span><svg width="5" height="5" style="margin:0 3px"><use href="#dark"/></svg><span class="fit" data-w="8">座標:</span><span class="fld text-center" style="width:80px;margin:0 4px">139.92947,35.91215</span><span class="fit" data-w="8">縮尺</span><span class="fld d-flex" style="width:24px;margin:0 3px">1:9,493<span class="ms-auto">▾</span></span><span class="fit" data-w="8">回転:</span><span class="fld d-flex" style="width:29px;margin:0 3px">0.0<span class="ms-auto">↕</span></span><span class="fit" data-w="13">■ レンダ</span><span class="fit" data-w="22" style="margin-left:5px">◎ EPSG:4326</span><svg width="5" height="5" viewBox="0 0 5 5" style="margin:0 5px 0 6px"><circle cx="2.500" cy="2.500" r="2.200" fill="#444"/></svg></div>
</section>

<!-- callout boxes and arrows -->
<svg class="overlay" style="left:0;top:0" width="932" height="575" viewBox="0 0 932 575">
 <g fill="none" stroke="#f00" stroke-width="4">
  <rect x="2" y="208" width="50" height="52"/><rect x="657" y="196" width="42" height="17.500"/><rect x="859" y="229" width="68" height="21"/><rect x="230" y="495" width="64" height="24"/>
  <path d="M54 234.500L465 223.500M699 208L846 226.500M857 240L614 231.500M581 232L425 319.500M296 501L549 455"/>
 </g>
 <g fill="#f00"><path d="M476 223.300l-13-6.300.3 13zM858 228.300l-12-8.300-1.500 13zM603 231l13.300-6-.5 13zM415 325.500l14.500-1-6.500-11.500zM561 453l-14-4 2.300 12.800z"/></g>
</svg>
</main>
<script>
const icon = n => `<svg viewBox="0 0 32 32"><use href="#${n}"/></svg>`;
document.querySelectorAll('[data-big]').forEach(row => {
  let h = '<div class="grip"></div>';
  row.dataset.big.split(' ').forEach(t => {
    if (t === '|') { h += '<div class="grip mid"></div>'; return; }
    const on = t.endsWith('*');
    h += `<div class="cell d-flex align-items-center justify-content-center"><div class="${on ? 'pressed d-flex align-items-center justify-content-center' : ''}">${icon(t.replace('*', ''))}</div></div>`;
  });
  row.innerHTML = h;
});
document.querySelectorAll('[data-mini]').forEach(row => {
  row.innerHTML = row.dataset.mini.split(' ').map(t => {
    if (t[0] === '_') return `<span class="flex-shrink-0" style="width:${t.slice(1)}px"></span>`;
    if (t[0] === '=') return `<span class="fit" style="font-size:4.5px;color:#287ba5" data-w="19">${t.slice(1)}</span>`;
    if (t === 'dd') return '<span class="dd"><svg viewBox="0 0 8 8"><use href="#dd"/></svg></span>';
    return `<span class="m d-flex${t.endsWith('*') ? ' on' : ''}">${icon(t.replace('*', ''))}</span>`;
  }).join('');
});
// condense each label to its nominal width
document.querySelectorAll('.fit[data-w]').forEach(e => {
  const w = e.getBoundingClientRect().width, want = +e.dataset.w;
  e.style.transform = `scaleX(${want / w})`;
  e.style.marginRight = (want - w) + 'px';
});
</script>
<script src="https://cdn.jsdelivr.net/npm/bootstrap@5.3.0/dist/js/bootstrap.bundle.min.js"></script>
</body>
</html>
